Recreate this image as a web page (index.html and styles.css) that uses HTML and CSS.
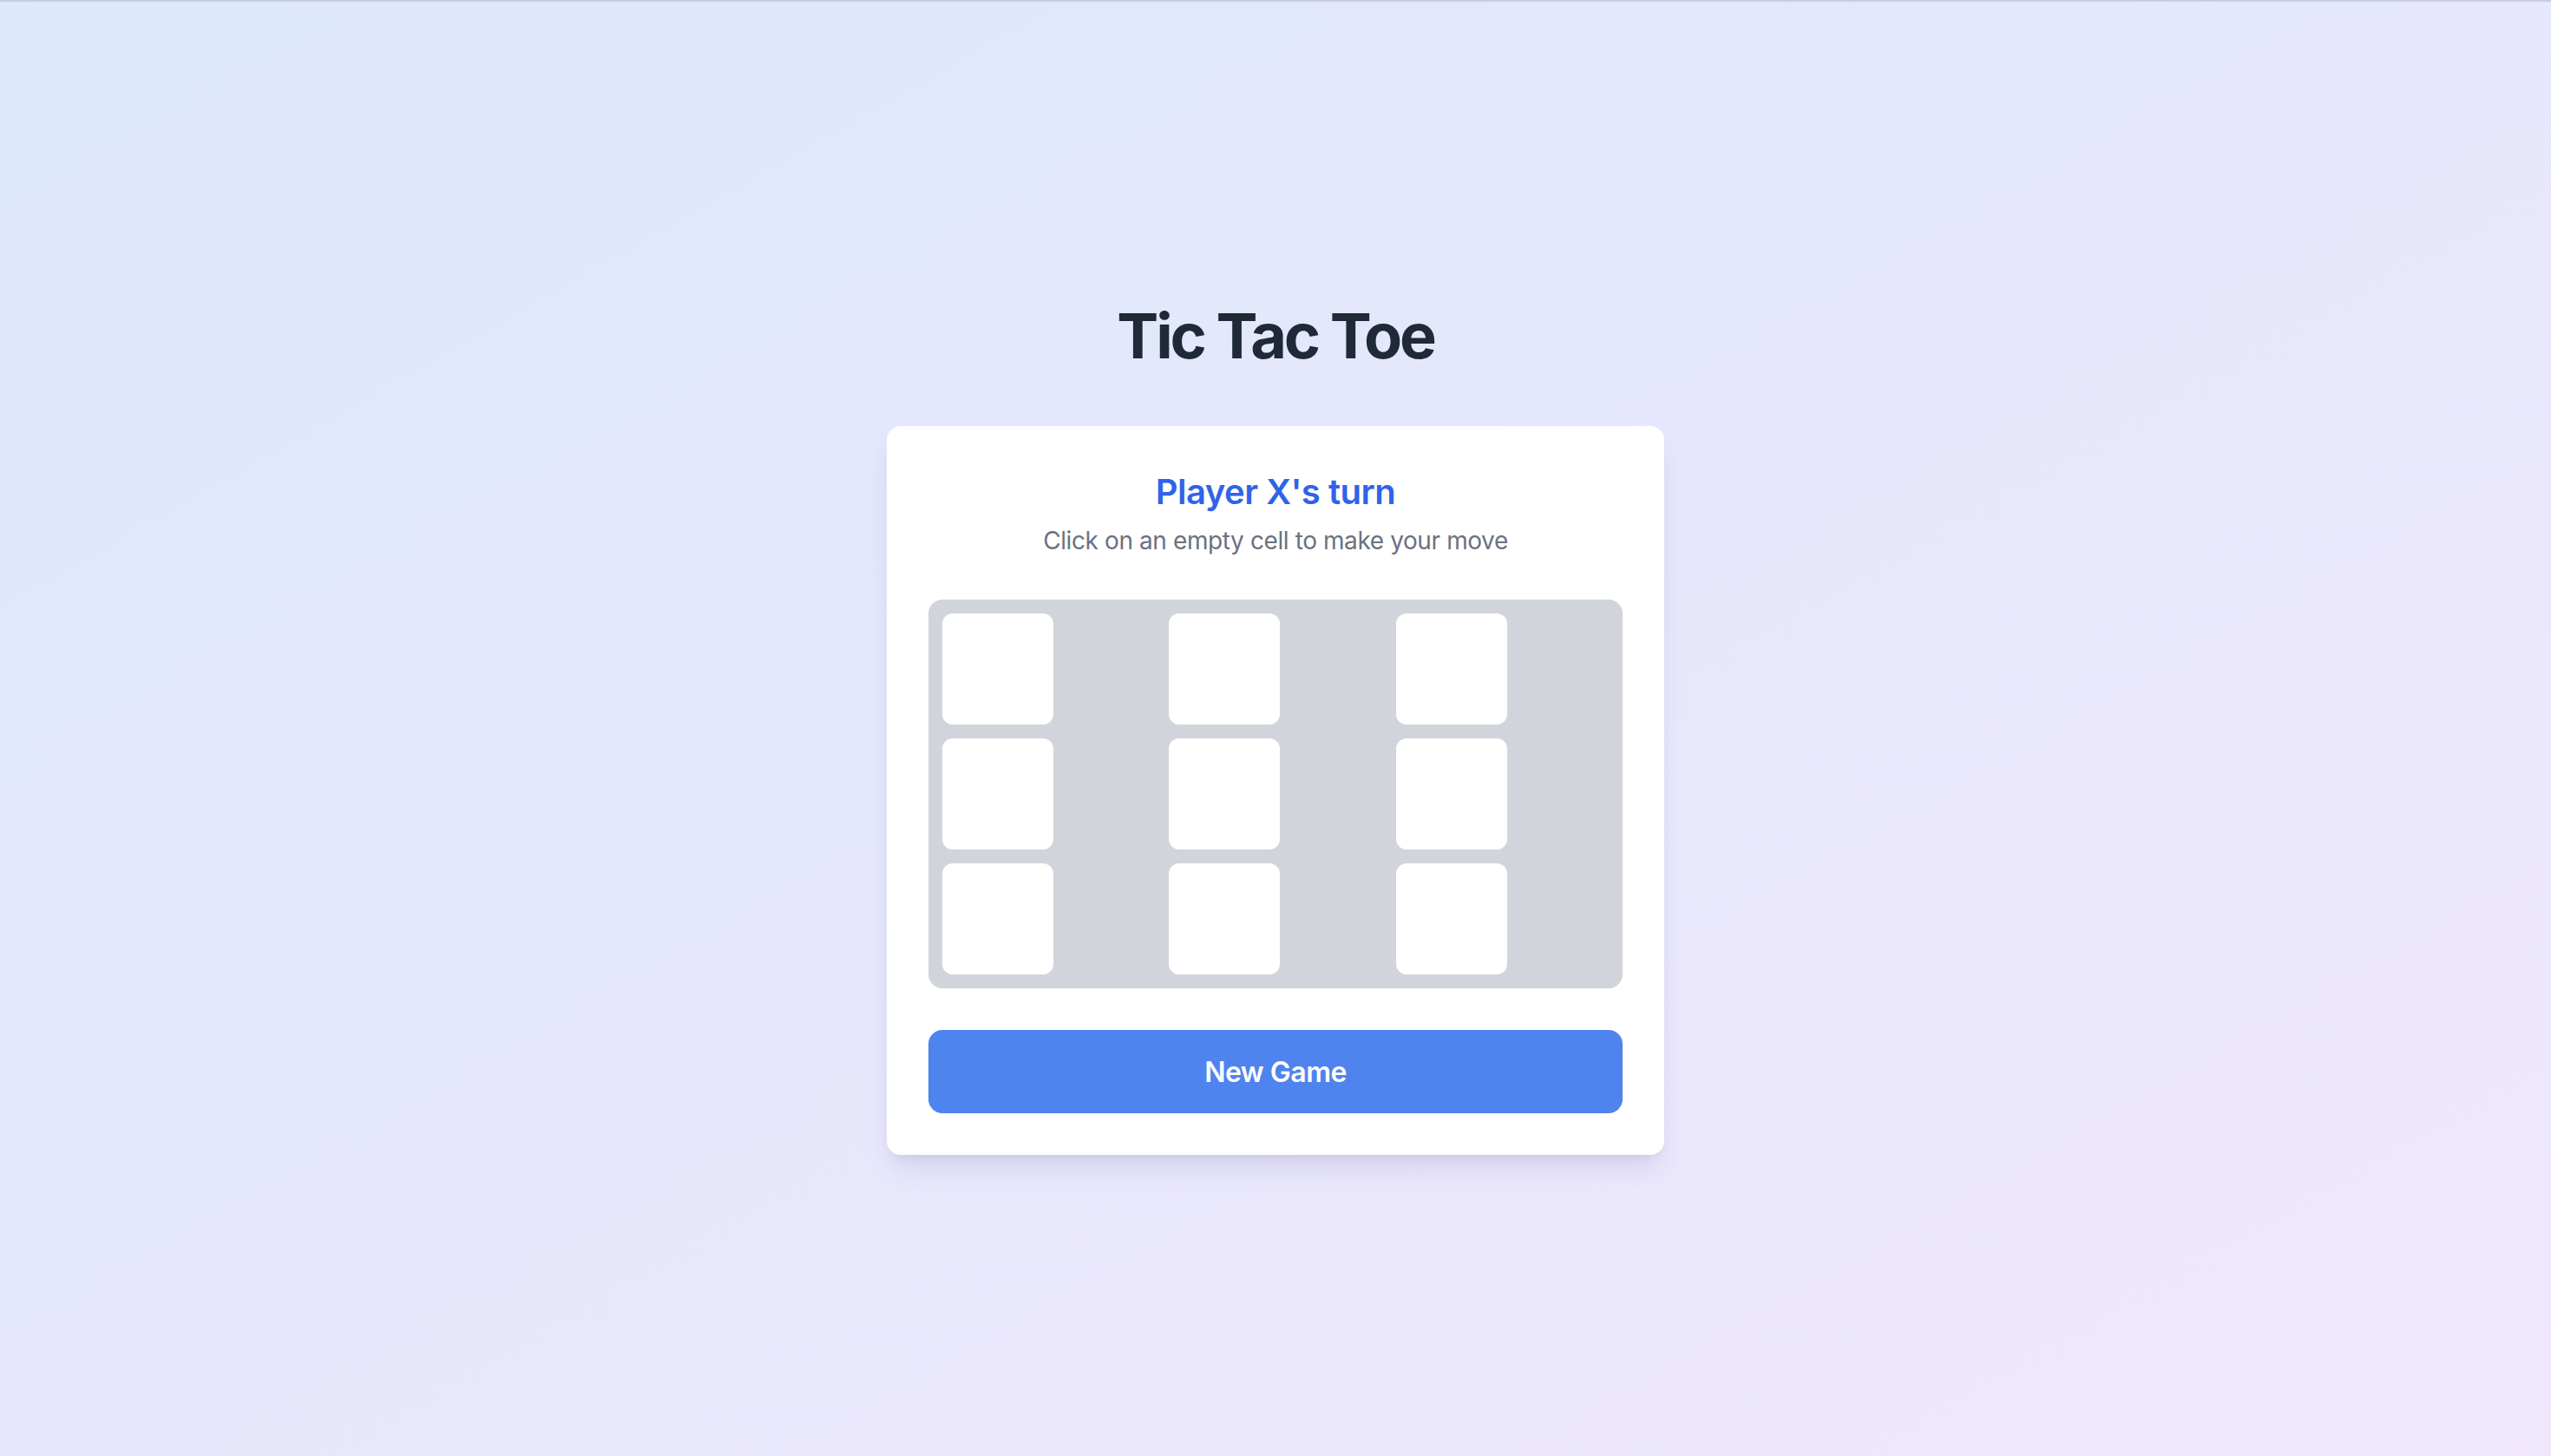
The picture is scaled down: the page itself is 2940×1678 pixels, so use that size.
FILE: index.html
```html
<!DOCTYPE html>
<html lang="en">
<head>
<meta charset="utf-8">
<title>Tic Tac Toe</title>
<link rel="stylesheet" href="styles.css">
</head>
<body>
<main class="page">
  <h1 class="title">Tic Tac Toe</h1>
  <section class="card">
    <div class="status">
      <h2 class="turn">Player X's turn</h2>
      <p class="hint">Click on an empty cell to make your move</p>
    </div>
    <div class="board">
      <div class="slot"><button class="cell"></button></div>
      <div class="slot"><button class="cell"></button></div>
      <div class="slot"><button class="cell"></button></div>
      <div class="slot"><button class="cell"></button></div>
      <div class="slot"><button class="cell"></button></div>
      <div class="slot"><button class="cell"></button></div>
      <div class="slot"><button class="cell"></button></div>
      <div class="slot"><button class="cell"></button></div>
      <div class="slot"><button class="cell"></button></div>
    </div>
    <button class="new-game">New Game</button>
  </section>
</main>
</body>
</html>
```

FILE: styles.css
```css
* { box-sizing: border-box; }
html, body { margin: 0; padding: 0; }
body {
  font-family: Inter, "Noto Sans", "Liberation Sans", sans-serif;
  background: linear-gradient(to bottom right, #dde8fc, #f0e7fd);
  min-height: 100vh;
}
.page {
  min-height: 100vh;
  display: flex;
  flex-direction: column;
  align-items: center;
  justify-content: center;
  box-shadow: inset 0 2px 0 #c6cee0;
}
.title {
  margin: 0 0 64px;
  font-size: 72px;
  line-height: 80px;
  font-weight: 700;
  color: #1f2937;
  letter-spacing: -3.2px;
}
.card {
  width: 896px;
  background: #ffffff;
  border-radius: 16px;
  padding: 48px;
  box-shadow: 0 20px 30px -6px rgba(60, 60, 120, 0.12), 0 8px 12px -6px rgba(60, 60, 120, 0.08);
}
.status {
  text-align: center;
  margin-bottom: 48px;
}
.turn {
  margin: 0;
  font-size: 40px;
  line-height: 56px;
  font-weight: 600;
  color: #3063e8;
  letter-spacing: -0.5px;
}
.hint {
  margin: 8px 0 0;
  font-size: 28px;
  line-height: 40px;
  color: #6b7280;
  letter-spacing: -0.4px;
}
.board {
  display: grid;
  grid-template-columns: repeat(3, 1fr);
  gap: 16px;
  padding: 16px;
  background: #d1d5db;
  border-radius: 16px;
}
.slot { display: flex; }
.cell {
  width: 128px;
  height: 128px;
  border: none;
  padding: 0;
  background: #ffffff;
  border-radius: 12px;
  cursor: pointer;
}
.new-game {
  display: block;
  width: 100%;
  margin-top: 48px;
  height: 96px;
  border: none;
  border-radius: 16px;
  background: #4f83ee;
  color: #ffffff;
  font-family: Inter, "Noto Sans", "Liberation Sans", sans-serif;
  font-size: 32px;
  font-weight: 600;
  letter-spacing: -0.5px;
  cursor: pointer;
}
```
